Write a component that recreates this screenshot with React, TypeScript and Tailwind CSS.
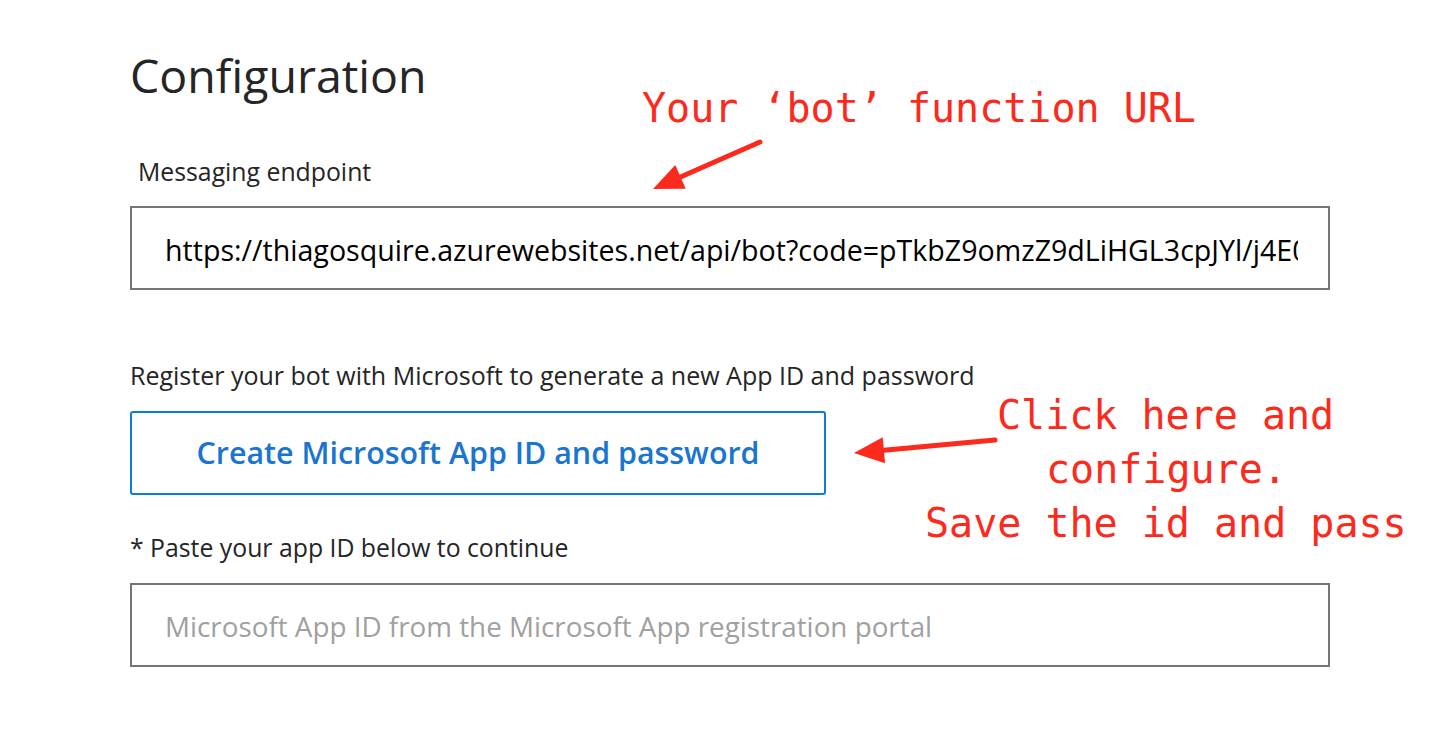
import React from 'react';

const sans = { fontFamily: '"Open Sans", "Noto Sans", sans-serif' };
const mono = { fontFamily: '"DejaVu Sans Mono", "Liberation Mono", monospace' };

const Arrow: React.FC<{ x1: number; y1: number; x2: number; y2: number; className?: string }> = ({ x1, y1, x2, y2, className }) => {
  const ang = Math.atan2(y2 - y1, x2 - x1);
  const len = 30;
  const w = 13;
  const bx = x2 - Math.cos(ang) * len;
  const by = y2 - Math.sin(ang) * len;
  const px = -Math.sin(ang) * w;
  const py = Math.cos(ang) * w;
  return (
    <svg className={className} width="1436" height="742" viewBox="0 0 1436 742">
      <line x1={x1} y1={y1} x2={bx} y2={by} stroke="#fc2a1c" strokeWidth="5" strokeLinecap="round" />
      <polygon points={`${x2},${y2} ${bx + px},${by + py} ${bx - px},${by - py}`} fill="#fc2a1c" />
    </svg>
  );
};

export default function App() {
  return (
    <div className="relative w-[1436px] h-[742px] bg-white overflow-hidden" style={sans}>
      <div className="pl-[130px] pt-[45px] w-[1330px] flex flex-col">
        <h1 className="text-[46.5px] leading-[60px] text-[#252525]">Configuration</h1>

        <label className="mt-[50px] pl-[8px] text-[24.8px] leading-[32px] text-[#252525]">Messaging endpoint</label>
        <div className="mt-[19px] h-[84px] border-2 border-[#767676] flex items-center pl-[33px] pr-[30px]">
          <div className="flex-1 overflow-hidden">
            <span className="block text-[28.6px] leading-[36px] pt-[4px] text-black whitespace-nowrap">
              https://thiagosquire.azurewebsites.net/api/bot?code=pTkbZ9omzZ9dLiHGL3cpJYl/j4E0aQ
            </span>
          </div>
        </div>

        <p className="mt-[69px] text-[25px] leading-[32px] text-[#252525]">
          Register your bot with Microsoft to generate a new App ID and password
        </p>
        <button className="mt-[20px] w-[696px] h-[84px] border-2 border-[#0f7bd9] rounded-[3px] text-[30.4px] font-semibold text-[#1a75d0]">
          Create Microsoft App ID and password
        </button>

        <p className="mt-[36px] text-[24.8px] leading-[32px] text-[#252525]">* Paste your app ID below to continue</p>
        <div className="mt-[20px] h-[84px] border-2 border-[#767676] flex items-center px-[33px]">
          <span className="text-[27.8px] leading-[36px] pt-[2px] text-[#a0a0a0] whitespace-nowrap">
            Microsoft App ID from the Microsoft App registration portal
          </span>
        </div>
      </div>

      <Arrow className="absolute left-0 top-0 pointer-events-none" x1={760} y1={142} x2={653} y2={189} />
      <Arrow className="absolute left-0 top-0 pointer-events-none" x1={995} y1={440} x2={854} y2={453} />

      <div className="absolute left-[642px] top-[84px] text-[40px] leading-[48px] text-[#fc2a1c] whitespace-nowrap" style={mono}>
        Your ‘bot’ function URL
      </div>
      <div className="absolute left-[920px] top-[388px] text-[40px] leading-[54px] text-[#fc2a1c] whitespace-nowrap" style={mono}>
        <div className="pl-[77px]">Click here and</div>
        <div className="pl-[126px]">configure.</div>
        <div className="pl-[5px]">Save the id and pass</div>
      </div>
    </div>
  );
}
